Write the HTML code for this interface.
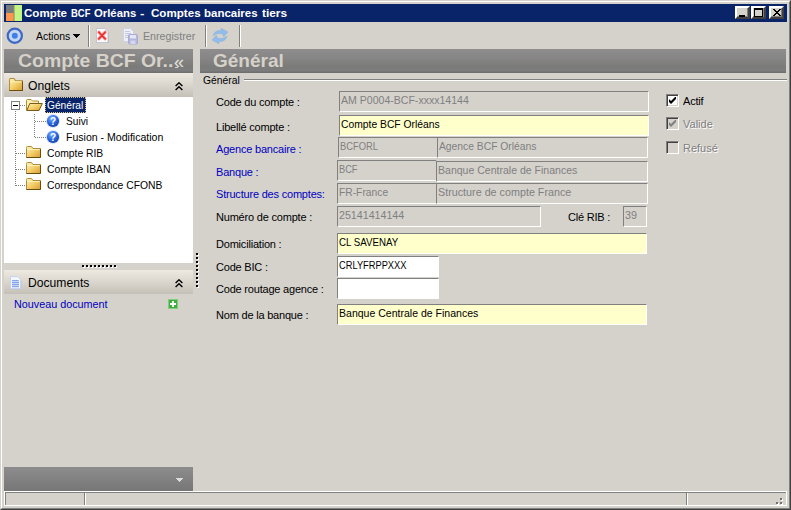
<!DOCTYPE html>
<html lang="fr">
<head>
<meta charset="utf-8">
<title>Compte BCF Orléans - Comptes bancaires tiers</title>
<style>
html,body{margin:0;padding:0;}
body{width:791px;height:510px;overflow:hidden;background:#d5d2cc;position:relative;
  font-family:"Liberation Sans",sans-serif;font-size:11px;color:#000;}
.a{position:absolute;}
.t{position:absolute;white-space:pre;line-height:13px;height:13px;transform-origin:0 0;}
.m{letter-spacing:-0.2px;}
/* window frame */
#frame{left:0;top:0;width:789px;height:508px;border:1px solid;border-color:#d5d2cc #404040 #404040 #d5d2cc;}
#frame2{left:1px;top:1px;width:787px;height:506px;border:1px solid;border-color:#fff #808080 #808080 #fff;}
#title{left:4px;top:4px;width:783px;height:18px;background:#0a246a;}
.tw{display:inline-block;white-space:pre;transform-origin:0 0;}
#title .t{top:2px;color:#fff;font-weight:bold;line-height:14px;height:14px;}
.cb{position:absolute;top:2px;width:11px;height:9px;background:#d5d2cc;border:2px solid;border-color:#fff #404040 #404040 #fff;box-shadow:inset -1px -1px 0 #808080;}
/* headers */
.hdr{position:absolute;top:49px;height:24px;background:linear-gradient(#8f8d8d 0%,#868585 40%,#7b7b79 72%,#7c7c7e 90%,#6c6c6c 100%);}
.hdr .t{font-weight:bold;font-size:19px;line-height:24px;height:24px;color:#d6d2ca;top:0;}
.sec{position:absolute;left:4px;width:189px;height:24px;background:linear-gradient(#eee9e0,#d8d4cc 55%,#c4c0b7);}
.sec .t{left:23.500px;top:6px;font-size:12.500px;line-height:14px;height:14px;transform:scaleX(.97);}
/* inputs */
.in{position:absolute;height:19px;border:1px solid;border-color:#808080 #fff #fff #808080;background:#d5d2cc;color:#808080;}
.in .t{left:1px;top:2px;}
.y{background:#ffffcc;color:#000;}
.w{background:#fff;color:#000;}
.lb{left:216px;}
.bl{color:#0000c0;}
.ck{position:absolute;left:666px;width:11px;height:11px;border:1px solid;border-color:#808080 #fff #fff #808080;box-shadow:inset 1px 1px 0 #404040,inset -1px -1px 0 #d5d2cc;background:#fff;}
.tr{left:0;}
</style>
</head>
<body>
<svg class="a" width="0" height="0" style="left:0;top:0"><defs>
<linearGradient id="fg" x1="0" y1="0" x2="1" y2="1"><stop offset="0" stop-color="#fff3bc"/><stop offset=".5" stop-color="#f4cf6a"/><stop offset="1" stop-color="#d89c2c"/></linearGradient>
<radialGradient id="qg" cx=".4" cy=".3" r=".75"><stop offset="0" stop-color="#7fb2ff"/><stop offset=".5" stop-color="#2f6fe6"/><stop offset="1" stop-color="#143c9e"/></radialGradient>
<symbol id="fold" viewBox="0 0 15 12"><path d="M.5 2.500v-1q0-1 1-1h3.500q.8 0 1.200 .7l.8 1.300h7.500v9h-14z" fill="url(#fg)" stroke="#b08a34"/><path d="M14.500 3v8.500h-14" fill="none" stroke="#6a4c12"/><path d="M1.500 3.500h12" stroke="#fff7d0" stroke-opacity=".8"/></symbol>
<symbol id="qm" viewBox="0 0 14 14"><circle cx="7" cy="7" r="6.900" fill="#d4e0f8"/><circle cx="7" cy="7" r="6.100" fill="url(#qg)"/><text x="7" y="10.600" font-size="10" font-weight="bold" fill="#fff" text-anchor="middle" font-family="Liberation Sans,sans-serif">?</text></symbol>
</defs></svg>
<div class="a" id="frame"></div>
<div class="a" id="frame2"></div>

<!-- title bar -->
<div class="a" id="title">
  <svg class="a" style="left:2px;top:1px" width="16" height="16" viewBox="0 0 16 16">
    <rect x="0" y="0" width="8" height="8" fill="#787a7c"/>
    <rect x="0" y="8" width="8" height="8" fill="#ff9650"/>
    <rect x="8" y="0" width="8" height="16" fill="#c3f584"/>
    <rect x="7" y="0" width="2" height="16" fill="#8a9a6a" opacity=".6"/>
  </svg>
  <div class="t" id="tt" style="left:20px"><span class="tw" style="width:47.4px;transform:scaleX(1.05)">Compte </span><span class="tw" style="width:22.5px;transform:scaleX(0.86)">BCF </span><span class="tw" style="width:45.7px;transform:scaleX(1.03)">Orléans </span><span class="tw" style="width:11px;transform:scaleX(1.2)">-  </span><span class="tw" style="width:53.9px;transform:scaleX(1.054)">Comptes </span><span class="tw" style="width:57.6px;transform:scaleX(1.043)">bancaires </span><span class="tw" style="width:26px;transform:scaleX(1.08)">tiers</span></div>
  <div class="cb" style="left:731px"><div class="a" style="left:2px;top:7px;width:6px;height:2px;background:#000"></div></div>
  <div class="cb" style="left:747px"><div class="a" style="left:1px;top:0px;width:7px;height:6px;border:1px solid #000;border-top-width:2px"></div></div>
  <div class="cb" style="left:765px"><svg class="a" style="left:2px;top:1px" width="8" height="7" viewBox="0 0 8 7" shape-rendering="crispEdges"><g fill="#000"><rect x="0" y="0" width="2" height="1"/><rect x="6" y="0" width="2" height="1"/><rect x="1" y="1" width="2" height="1"/><rect x="5" y="1" width="2" height="1"/><rect x="2" y="2" width="4" height="1"/><rect x="3" y="3" width="2" height="1"/><rect x="2" y="4" width="4" height="1"/><rect x="1" y="5" width="2" height="1"/><rect x="5" y="5" width="2" height="1"/><rect x="0" y="6" width="2" height="1"/><rect x="6" y="6" width="2" height="1"/></g></svg></div>
</div>

<!-- toolbar -->
<svg class="a" style="left:6px;top:27px" width="18" height="18" viewBox="0 0 18 18"><circle cx="8.800" cy="8.800" r="7.100" fill="#c4d6f6" stroke="#3c68c4" stroke-width="2.200"/><circle cx="8.800" cy="8.800" r="3" fill="#3f80e6"/></svg>
<div class="t" style="left:36px;top:30px;transform:scaleX(.95)">Actions</div>
<svg class="a" style="left:73px;top:34px" width="7" height="4" viewBox="0 0 7 4" shape-rendering="crispEdges"><path d="M0 0h7v1h-1v1h-1v1h-1v1h-1v-1h-1v-1h-1v-1h-1z" fill="#000"/></svg>
<div class="a" style="left:88px;top:25px;width:1px;height:22px;background:#808080"></div>
<div class="a" style="left:89px;top:25px;width:1px;height:22px;background:#fff"></div>
<svg class="a" style="left:96px;top:28px" width="14" height="16" viewBox="0 0 14 16"><path d="M1.500 1.500h8l3 3v10.500h-11z" fill="#a8a8a8"/><path d="M.5 .5h8.500l3 3v11h-11.500z" fill="#fcfcff" stroke="#c0c4d0"/><path d="M2.800 4.200l6.400 6.600M9.200 4.200l-6.400 6.600" stroke="#f8b4b4" stroke-width="3.600" stroke-linecap="round"/><path d="M2.800 4.200l6.400 6.600M9.200 4.200l-6.400 6.600" stroke="#ea3030" stroke-width="1.700" stroke-linecap="round"/></svg>
<svg class="a" style="left:122px;top:28px" width="16" height="17" viewBox="0 0 16 17"><path d="M1.500 .5h7l3 3v10h-10z" fill="#eef0f8" stroke="#cfd2e2"/><path d="M3 3.500h5M3 5.500h6M3 7.500h6M3 9.500h4" stroke="#c4c8e0"/><rect x="6.500" y="6.500" width="9" height="9.500" rx="1" fill="#b4b6dc" stroke="#a9abd4"/><rect x="8" y="7" width="6" height="3.500" fill="#e4e6f4"/><rect x="8.500" y="12.500" width="5" height="3.500" fill="#d4d6ec"/></svg>
<div class="t" style="left:142.500px;top:30px;color:#808080;transform:scaleX(.97)">Enregistrer</div>
<div class="a" style="left:205px;top:25px;width:1px;height:22px;background:#808080"></div>
<div class="a" style="left:206px;top:25px;width:1px;height:22px;background:#fff"></div>
<svg class="a" style="left:212px;top:28px" width="16" height="16" viewBox="0 0 16 16"><g fill="#92bdea" stroke="#7aa9de" stroke-width=".4"><path id="ra" d="M1 7.800C2 4 5 2 9.300 2.500L9 .2L15.900 3.900L11.700 8.700L10.600 5.900C7.500 4.800 4 5.600 1 7.800Z"/><use href="#ra" transform="rotate(180 8 8)"/></g></svg>
<div class="a" style="left:239px;top:25px;width:1px;height:22px;background:#808080"></div>
<div class="a" style="left:240px;top:25px;width:1px;height:22px;background:#fff"></div>

<!-- headers -->
<div class="hdr" style="left:4px;width:189px"><div class="t" style="left:14px;transform:scaleX(1.022)">Compte BCF Or..</div><div class="t" style="left:170px;font-size:18px;font-weight:normal;top:1px;color:#e4e2dc">«</div><div class="a" style="left:171px;top:18px;width:3px;height:1px;background:#d0d0d0"></div></div>
<div class="hdr" style="left:200px;width:586px"><div class="t" style="left:13px">Général</div></div>

<!-- left panel -->
<div class="sec" style="top:73px">
  <svg class="a" style="left:5px;top:5px" width="14" height="13" viewBox="0 0 15 12" preserveAspectRatio="none"><use href="#fold"/></svg>
  <div class="t">Onglets</div>
  <svg class="a" style="left:170.500px;top:9px" width="8" height="9" viewBox="0 0 8 9"><path d="M.6 4l3.400-3.200l3.400 3.200M.6 8l3.400-3.200l3.400 3.200" fill="none" stroke="#000" stroke-width="1.400"/></svg>
</div>
<div class="a" style="left:4px;top:97px;width:189px;height:166px;background:#fff"></div>

<!-- tree -->
<svg class="a" style="left:4px;top:97px" width="189" height="100" viewBox="0 0 189 100" shape-rendering="crispEdges">
  <g stroke="#808080" stroke-dasharray="1 1" fill="none">
    <path d="M11.500 14v74.500M16 8.500h6M12 56.500h10M12 72.500h10M12 88.500h10M30.500 17v23.500M31 24.500h11M31 40.500h11"/>
  </g>
  <rect x="7.500" y="4.500" width="8" height="8" fill="#fff" stroke="#808080"/>
  <path d="M9 8.500h5" stroke="#000"/>
</svg>
<!-- folder icons -->
<svg class="a" style="left:26px;top:98px" width="17" height="14" viewBox="0 0 17 14"><path d="M.5 12.500v-10q0-1 1-1h3.500l1.500 1.500h6v3" fill="#fff0b4" stroke="#b08a34"/><path d="M.8 12.500l3-7h12.500l-3.300 7z" fill="url(#fg)" stroke="#7a5a18"/></svg>
<svg class="a" style="left:26px;top:146px" width="15" height="12"><use href="#fold"/></svg>
<svg class="a" style="left:26px;top:162px" width="15" height="12"><use href="#fold"/></svg>
<svg class="a" style="left:26px;top:178px" width="15" height="12"><use href="#fold"/></svg>
<!-- question icons -->
<svg class="a" style="left:46px;top:114px" width="14" height="14"><use href="#qm"/></svg>
<svg class="a" style="left:46px;top:130px" width="14" height="14"><use href="#qm"/></svg>

<div class="a" style="left:45px;top:97px;width:41px;height:16px;background:#0a246a;outline:1px dotted #d8c890;outline-offset:-1px"></div>
<div class="t" style="left:47px;top:99px;color:#fff;transform:scaleX(0.927)">Général</div>
<div class="t" style="left:66px;top:115px;transform:scaleX(0.92)">Suivi</div>
<div class="t" style="left:66px;top:131px;transform:scaleX(0.959)">Fusion - Modification</div>
<div class="t" style="left:47px;top:147px;transform:scaleX(0.938)">Compte RIB</div>
<div class="t" style="left:47px;top:163px;transform:scaleX(0.944)">Compte IBAN</div>
<div class="t" style="left:47px;top:179px;transform:scaleX(0.939)">Correspondance CFONB</div>

<!-- splitter dots -->
<svg class="a" style="left:82px;top:265px" width="36" height="3" shape-rendering="crispEdges"><rect x="1" y="1" width="2" height="2" fill="#fff"/><rect x="0" y="0" width="2" height="2" fill="#000"/><rect x="5" y="1" width="2" height="2" fill="#fff"/><rect x="4" y="0" width="2" height="2" fill="#000"/><rect x="9" y="1" width="2" height="2" fill="#fff"/><rect x="8" y="0" width="2" height="2" fill="#000"/><rect x="13" y="1" width="2" height="2" fill="#fff"/><rect x="12" y="0" width="2" height="2" fill="#000"/><rect x="17" y="1" width="2" height="2" fill="#fff"/><rect x="16" y="0" width="2" height="2" fill="#000"/><rect x="21" y="1" width="2" height="2" fill="#fff"/><rect x="20" y="0" width="2" height="2" fill="#000"/><rect x="25" y="1" width="2" height="2" fill="#fff"/><rect x="24" y="0" width="2" height="2" fill="#000"/><rect x="29" y="1" width="2" height="2" fill="#fff"/><rect x="28" y="0" width="2" height="2" fill="#000"/><rect x="33" y="1" width="2" height="2" fill="#fff"/><rect x="32" y="0" width="2" height="2" fill="#000"/></svg>
<svg class="a" style="left:196px;top:253px" width="3" height="36" shape-rendering="crispEdges"><rect x="1" y="1" width="2" height="2" fill="#fff"/><rect x="0" y="0" width="2" height="2" fill="#000"/><rect x="1" y="5" width="2" height="2" fill="#fff"/><rect x="0" y="4" width="2" height="2" fill="#000"/><rect x="1" y="9" width="2" height="2" fill="#fff"/><rect x="0" y="8" width="2" height="2" fill="#000"/><rect x="1" y="13" width="2" height="2" fill="#fff"/><rect x="0" y="12" width="2" height="2" fill="#000"/><rect x="1" y="17" width="2" height="2" fill="#fff"/><rect x="0" y="16" width="2" height="2" fill="#000"/><rect x="1" y="21" width="2" height="2" fill="#fff"/><rect x="0" y="20" width="2" height="2" fill="#000"/><rect x="1" y="25" width="2" height="2" fill="#fff"/><rect x="0" y="24" width="2" height="2" fill="#000"/><rect x="1" y="29" width="2" height="2" fill="#fff"/><rect x="0" y="28" width="2" height="2" fill="#000"/><rect x="1" y="33" width="2" height="2" fill="#fff"/><rect x="0" y="32" width="2" height="2" fill="#000"/></svg>

<div class="sec" style="top:270px">
  <svg class="a" style="left:6px;top:6px" width="12" height="14" viewBox="0 0 12 14"><path d="M1.500 1.500h6l3 3v8h-9z" fill="#bcbcbc" transform="translate(.8,.8)"/><path d="M.5 .5h7l3 3v9h-10z" fill="#f4f7ff" stroke="#c4d4f4"/><rect x="2" y="4" width="7" height="7.500" fill="#c6d6fa"/><path d="M2 4.500h6.500M2 6.500h7M2 8.500h7M2 10.500h7" stroke="#86a6ea"/></svg>
  <div class="t">Documents</div>
  <svg class="a" style="left:170.500px;top:9px" width="8" height="9" viewBox="0 0 8 9"><path d="M.6 4l3.400-3.200l3.400 3.200M.6 8l3.400-3.200l3.400 3.200" fill="none" stroke="#000" stroke-width="1.400"/></svg>
</div>
<div class="t bl" style="left:14px;top:298px;transform:scaleX(.98)">Nouveau document</div>
<svg class="a" style="left:168px;top:299px" width="10" height="10" viewBox="0 0 10 10"><rect x=".5" y=".5" width="9" height="9" fill="#3fae3f" stroke="#7fd07f"/><path d="M5 2v6M2 5h6" stroke="#fff" stroke-width="2"/></svg>

<div class="a" style="left:4px;top:467px;width:189px;height:24px;background:linear-gradient(#8d8d8f,#767676)"></div>
<svg class="a" style="left:176px;top:478px" width="7" height="4" viewBox="0 0 7 4" shape-rendering="crispEdges"><path d="M0 0h7v1h-1v1h-1v1h-1v1h-1v-1h-1v-1h-1v-1h-1z" fill="#dcdcdc"/></svg>

<!-- groupbox -->
<div class="a" style="left:244px;top:79px;width:543px;height:1px;background:#808080"></div>
<div class="a" style="left:244px;top:80px;width:543px;height:1px;background:#fff"></div>
<div class="t" style="left:202.500px;top:74px;transform:scaleX(.94)">Général</div>

<!-- form labels -->
<div class="t m lb" style="top:96px">Code du compte :</div>
<div class="t m lb" style="top:121px">Libellé compte :</div>
<div class="t m lb bl" style="top:143px">Agence bancaire :</div>
<div class="t m lb bl" style="top:166px">Banque :</div>
<div class="t m lb bl" style="top:188px">Structure des comptes:</div>
<div class="t m lb" style="top:211px">Numéro de compte :</div>
<div class="t m lb" style="top:238px">Domiciliation :</div>
<div class="t m lb" style="top:261px">Code BIC :</div>
<div class="t m lb" style="top:283px">Code routage agence :</div>
<div class="t m lb" style="top:309px">Nom de la banque :</div>
<div class="t m" style="left:568px;top:211px">Clé RIB :</div>

<!-- inputs -->
<div class="in" style="left:339px;top:91px;width:308px"><div class="t" style="transform:scaleX(0.959)">AM P0004-BCF-xxxx14144</div></div>
<div class="in y" style="left:339px;top:115px;width:308px"><div class="t" style="transform:scaleX(0.938)">Compte BCF Orléans</div></div>
<div class="in" style="left:338px;top:137px;width:98px"><div class="t" style="transform:scaleX(0.85)">BCFORL</div></div>
<div class="in" style="left:437px;top:137px;width:209px"><div class="t" style="transform:scaleX(0.937)">Agence BCF Orléans</div></div>
<div class="in" style="left:337px;top:160px;width:98px"><div class="t" style="transform:scaleX(0.84)">BCF</div></div>
<div class="in" style="left:436px;top:161px;width:210px"><div class="t" style="transform:scaleX(.957)">Banque Centrale de Finances</div></div>
<div class="in" style="left:337px;top:183px;width:98px"><div class="t" style="transform:scaleX(0.934)">FR-France</div></div>
<div class="in" style="left:436px;top:183px;width:210px"><div class="t" style="transform:scaleX(0.978)">Structure de compte France</div></div>
<div class="in" style="left:337px;top:206px;width:202px"><div class="t" style="transform:scaleX(0.969)">25141414144</div></div>
<div class="in" style="left:623px;top:206px;width:22px"><div class="t" style="transform:scaleX(0.98)">39</div></div>
<div class="in y" style="left:337px;top:233px;width:308px"><div class="t" style="transform:scaleX(0.884)">CL SAVENAY</div></div>
<div class="in w" style="left:337px;top:256px;width:100px"><div class="t" style="transform:scaleX(0.844)">CRLYFRPPXXX</div></div>
<div class="in w" style="left:337px;top:278px;width:100px"></div>
<div class="in y" style="left:337px;top:304px;width:308px"><div class="t" style="transform:scaleX(.957)">Banque Centrale de Finances</div></div>

<!-- checkboxes -->
<div class="ck" style="top:94px"><svg class="a" style="left:2px;top:2px" width="7" height="7" viewBox="0 0 7 7"><path d="M0 2v3l2 2l5-5v-3l-5 5z" fill="#000"/></svg></div>
<div class="t m" style="left:683px;top:95px">Actif</div>
<div class="ck" style="top:117px;background:#d5d2cc"><svg class="a" style="left:2px;top:2px" width="7" height="7" viewBox="0 0 7 7"><path d="M0 2v3l2 2l5-5v-3l-5 5z" fill="#808080"/></svg></div>
<div class="t" style="left:683px;top:118px;color:#808080;text-shadow:1px 1px 0 #fff">Valide</div>
<div class="ck" style="top:141px;background:#d5d2cc"></div>
<div class="t" style="left:683px;top:142px;color:#808080;text-shadow:1px 1px 0 #fff">Refusé</div>

<!-- status bar -->
<div class="a" style="left:4px;top:491px;width:781px;height:13px;border:1px solid #fff"></div>
<div class="a" style="left:5px;top:492px;width:780px;height:12px;border-top:1px solid #808080;border-left:1px solid #808080"></div>
<div class="a" style="left:84px;top:493px;width:1px;height:12px;background:#808080"></div>
<div class="a" style="left:85px;top:493px;width:1px;height:12px;background:#fff"></div>
<div class="a" style="left:686px;top:493px;width:1px;height:12px;background:#808080"></div>
<div class="a" style="left:687px;top:493px;width:1px;height:12px;background:#fff"></div>
<svg class="a" style="left:776px;top:498px" width="7" height="7" shape-rendering="crispEdges"><g fill="#fff"><rect x="5" y="1" width="2" height="2"/><rect x="1" y="5" width="2" height="2"/><rect x="5" y="5" width="2" height="2"/></g><g fill="#707070"><rect x="4" y="0" width="2" height="2"/><rect x="0" y="4" width="2" height="2"/><rect x="4" y="4" width="2" height="2"/></g></svg>
</body>
</html>
